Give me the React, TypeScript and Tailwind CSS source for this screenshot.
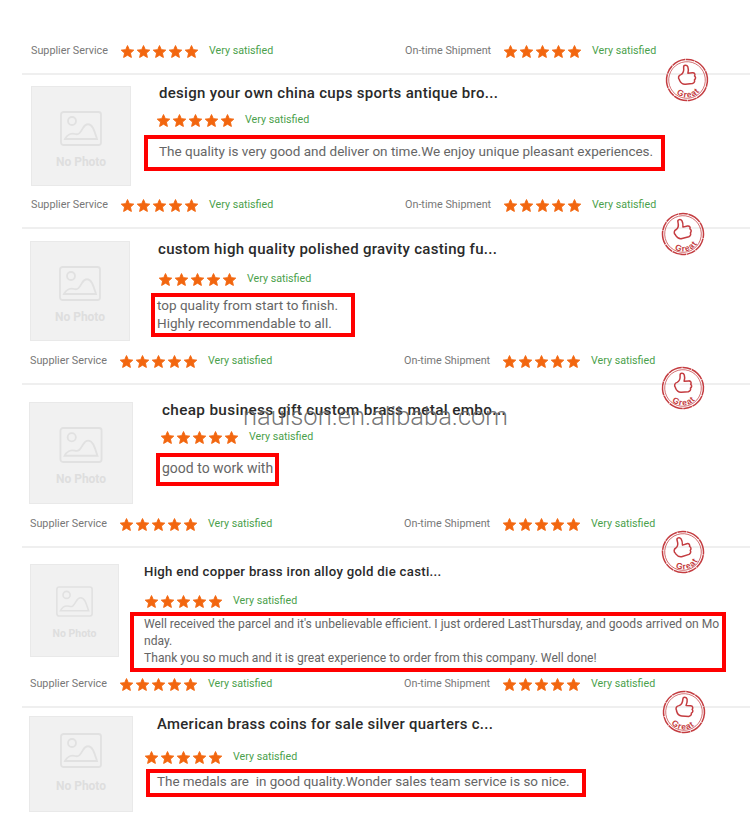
const Star = () => (
  <svg viewBox="0 0 24 24" className="w-[15px] h-[15px] shrink-0">
    <path
      d="M12 2.500l2.900 6.500 7.100.8-5.300 4.700 1.500 7-6.200-3.600-6.200 3.600 1.500-7L2 9.800l7.100-.8z"
      fill="#f2660f"
      stroke="#f2660f"
      strokeWidth="1.500"
      strokeLinejoin="round"
    />
  </svg>
);

const Stars = () => (
  <div className="flex gap-px">
    <Star />
    <Star />
    <Star />
    <Star />
    <Star />
  </div>
);

const Rating = ({ className }: { className: string }) => (
  <div className={`flex items-center ${className}`}>
    <Stars />
    <span className="ml-[10px] text-[10.700px] leading-4 text-[#4b9f4b]">Very satisfied</span>
  </div>
);

const Scores = ({ shift }: { shift: string }) => (
  <div className={`flex items-center h-6 ${shift}`}>
    <span className="w-[89px] text-[10.800px] leading-4 text-[#777]">Supplier Service</span>
    <Rating className="w-[285px]" />
    <span className="w-[98px] text-[10.800px] leading-4 text-[#777]">On-time Shipment</span>
    <Rating className="" />
  </div>
);

const NoPhoto = ({ className, iconClass, textClass }: { className: string; iconClass: string; textClass: string }) => (
  <div className={`shrink-0 flex flex-col items-center bg-[#f1f1f1] border border-[#e9e9e9] ${className}`}>
    <svg viewBox="0 0 42 35" fill="none" stroke="#e1e1e1" strokeWidth="1.800" className={iconClass}>
      <rect x="1" y="1" width="40" height="33" rx="2.500" />
      <circle cx="12" cy="10" r="4" />
      <path d="M5 28c2-4 6-6 10-5 4 1 5-1 8-6 3-5 7-5 10 0 2 4 3 8 4 11z" />
    </svg>
    <span className={`font-bold leading-4 text-[#dedede] ${textClass}`}>No Photo</span>
  </div>
);

const Review = ({ className, children }: { className: string; children: React.ReactNode }) => (
  <div className={`border-4 border-[#f00] whitespace-nowrap text-[#666] ${className}`}>{children}</div>
);

const Title = ({ className, children }: { className: string; children: React.ReactNode }) => (
  <div className={`leading-5 font-medium whitespace-nowrap text-[#2a2a2a] ${className}`}>{children}</div>
);

const Great = ({ className, id, turn }: { className: string; id: string; turn: string }) => (
  <svg viewBox="0 0 44 44" className={`absolute w-11 h-11 ${className}`}>
    <g transform={`rotate(${turn} 22 22)`} fill="none" stroke="#c43c40">
      <circle cx="22" cy="22" r="20.500" strokeWidth="1.500" strokeDasharray="9 0.6 14 0.6" />
      <circle cx="22" cy="22" r="18.300" strokeWidth="0.700" />
      <path
        d="M14.500 21c-1.500-2-.5-4.500 2-5 3-1 3.500-3.500 3.500-7 0-2.500 3.500-2.500 4.200 0 .6 2.300 0 4.600-.6 6.300h4.600c2.300 0 2.800 2.300 1.700 3.400 1.200 1.200 1.200 2.900-.5 4 .5 1.700-.6 2.900-2.400 3.400h-7c-2.800 0-4.500-1.700-5.500-4.600z"
        strokeWidth="1.500"
        strokeLinejoin="round"
      />
      <path id={id} d="M5.500 23a16.500 16.500 0 0 0 33 0" stroke="none" />
      <text fill="#c43c40" stroke="none" fontSize="8.500" fontWeight="700" letterSpacing="0.8" fontFamily="'Liberation Sans', sans-serif">
        <textPath href={`#${id}`} startOffset="50%" textAnchor="middle">
          Great
        </textPath>
      </text>
    </g>
  </svg>
);

const App = () => {
  return (
    <div className="relative h-[829px] w-[750px] overflow-hidden bg-white font-['Roboto',sans-serif]">
      <div className="h-[73px] pt-[39px]">
        <Scores shift="ml-[31px]" />
      </div>

      <section className="ml-[22px] h-[154px] border-t-2 border-[#efefef]">
        <div className="flex h-[118px] pt-[11px]">
          <NoPhoto className="ml-[9px] w-[100px] h-[100px] pt-6" iconClass="w-[42px] h-[35px]" textClass="mt-2 text-[12px]" />
          <div className="ml-[16px]">
            <Title className="ml-[12px] mt-[-3px] text-[15px] tracking-[0.3px]">design your own china cups sports antique bro...</Title>
            <Rating className="ml-[9px] mt-[9px]" />
            <Review className="mt-[7px] -ml-[3px] w-[521px] h-9 pl-[11px] leading-[24px] text-[13.500px]">
              The quality is very good and deliver on time.We enjoy unique pleasant experiences.
            </Review>
          </div>
        </div>
        <Scores shift="ml-[9px]" />
      </section>

      <section className="ml-[22px] h-[156px] border-t-2 border-[#efefef]">
        <div className="flex h-[120px] pt-[12px]">
          <NoPhoto className="ml-[8px] w-[100px] h-[100px] pt-6" iconClass="w-[42px] h-[35px]" textClass="mt-2 text-[12px]" />
          <div className="ml-[22px]">
            <Title className="ml-[6px] mt-[-2px] text-[15px] tracking-[0.3px]">custom high quality polished gravity casting fu...</Title>
            <Rating className="ml-[6px] mt-[12px]" />
            <Review className="mt-[6px] -ml-px w-[204px] h-[44px] pl-[2px] leading-[18px] text-[13.500px]">
              <div className="-mt-px">
                top quality from start to finish.
                <br />
                Highly recommendable to all.
              </div>
            </Review>
          </div>
        </div>
        <Scores shift="ml-[8px]" />
      </section>

      <section className="ml-[22px] h-[163px] border-t-2 border-[#efefef]">
        <div className="flex h-[127px] pt-[17px]">
          <NoPhoto className="ml-[7px] w-[104px] h-[102px] pt-6" iconClass="w-[44px] h-[36px]" textClass="mt-2 text-[12px]" />
          <div className="ml-[23px]">
            <Title className="ml-[6px] mt-[-2px] text-[15.300px] tracking-[0.35px]">cheap business gift custom brass metal embo...</Title>
            <Rating className="ml-[4px] mt-[9px]" />
            <Review className="mt-[8px] w-[123px] h-[33px] pl-[2px] leading-[22px] text-[14px]">good to work with</Review>
          </div>
        </div>
        <Scores shift="ml-[8px]" />
      </section>

      <section className="ml-[22px] h-[160px] border-t-2 border-[#efefef]">
        <div className="flex h-[124px] pt-[16px]">
          <NoPhoto className="ml-[8px] w-[89px] h-[93px] pt-[21px]" iconClass="w-[37px] h-[31px]" textClass="mt-[9px] text-[10.500px]" />
          <div className="ml-[11px]">
            <Title className="ml-[14px] mt-[-2px] text-[13.200px] tracking-[0.3px]">High end copper brass iron alloy gold die casti...</Title>
            <Rating className="ml-[14px] mt-[11px]" />
            <Review className="mt-[3px] w-[596px] h-[60px] pl-[10px] leading-[17px] text-[12.100px]">
              Well received the parcel and it's unbelievable efficient. I just ordered LastThursday, and goods arrived on Mo
              <br />
              nday.
              <br />
              Thank you so much and it is great experience to order from this company. Well done!
            </Review>
          </div>
        </div>
        <Scores shift="ml-[8px]" />
      </section>

      <section className="ml-[22px] h-[123px] border-t-2 border-[#efefef]">
        <div className="flex pt-[8px]">
          <NoPhoto className="ml-[7px] w-[104px] h-[96px] pt-[16px]" iconClass="w-[44px] h-[35px]" textClass="mt-[10px] text-[12px]" />
          <div className="ml-[12px]">
            <Title className="ml-[12px] mt-[-2px] text-[14.900px] tracking-[0.3px]">American brass coins for sale silver quarters c...</Title>
            <Rating className="-ml-px mt-[15px]" />
            <Review className="mt-[4px] ml-px w-[440px] h-[28px] pl-[7px] leading-[18px] text-[13.430px]">
              The medals are&nbsp; in good quality.Wonder sales team service is so nice.
            </Review>
          </div>
        </div>
      </section>

      <Great id="great-1" turn="-6" className="left-[665px] top-[58px]" />
      <Great id="great-2" turn="-14" className="left-[661px] top-[212px]" />
      <Great id="great-3" turn="-4" className="left-[661px] top-[366px]" />
      <Great id="great-4" turn="-18" className="left-[661px] top-[530px]" />
      <Great id="great-5" turn="4" className="left-[662px] top-[690px]" />

      <div className="absolute left-[243px] top-[400px] text-[25.500px] leading-8 font-light text-[#666]/90">
        nauison.en.alibaba.com
      </div>
    </div>
  );
};

export default App;
